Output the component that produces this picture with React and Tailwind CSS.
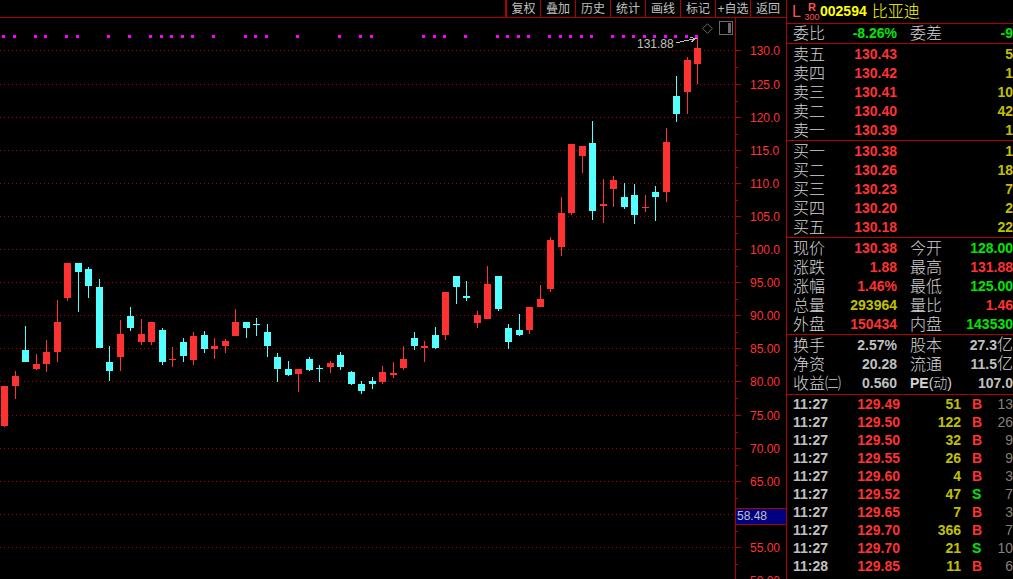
import clsx from 'clsx';

const TABS = ['复权', '叠加', '历史', '统计', '画线', '标记', '+自选', '返回'];

// [high, body top, body bottom, low, direction]
const CANDLES = [
  [386, 386, 426, 427, 'up'],
  [371, 376, 386, 399, 'up'],
  [326, 350, 362, 362, 'down'],
  [354, 364, 369, 370, 'up'],
  [340, 352, 364, 372, 'up'],
  [300, 322, 352, 362, 'up'],
  [263, 263, 298, 301, 'up'],
  [263, 263, 272, 312, 'down'],
  [267, 269, 286, 298, 'down'],
  [279, 287, 348, 348, 'down'],
  [346, 362, 371, 381, 'down'],
  [320, 334, 357, 371, 'up'],
  [307, 316, 328, 331, 'down'],
  [319, 334, 342, 345, 'up'],
  [322, 322, 342, 345, 'up'],
  [328, 330, 362, 365, 'down'],
  [347, 359, 360, 367, 'up'],
  [338, 342, 356, 362, 'down'],
  [332, 336, 360, 365, 'up'],
  [331, 335, 349, 353, 'down'],
  [338, 346, 349, 359, 'up'],
  [339, 341, 346, 353, 'up'],
  [309, 322, 336, 336, 'up'],
  [322, 322, 328, 338, 'down'],
  [318, 324, 325, 336, 'down'],
  [324, 332, 346, 357, 'down'],
  [353, 357, 369, 382, 'down'],
  [361, 369, 375, 376, 'down'],
  [369, 369, 374, 392, 'up'],
  [357, 359, 370, 371, 'down'],
  [365, 368, 369, 382, 'down'],
  [361, 363, 367, 373, 'up'],
  [352, 355, 367, 370, 'down'],
  [371, 372, 384, 385, 'down'],
  [381, 384, 391, 394, 'down'],
  [377, 381, 384, 389, 'down'],
  [366, 372, 382, 384, 'up'],
  [362, 373, 375, 378, 'up'],
  [346, 359, 368, 370, 'up'],
  [332, 338, 346, 350, 'down'],
  [341, 346, 348, 362, 'up'],
  [327, 335, 348, 349, 'down'],
  [292, 292, 335, 340, 'up'],
  [276, 276, 287, 304, 'down'],
  [281, 296, 298, 301, 'down'],
  [311, 315, 323, 328, 'up'],
  [266, 284, 319, 319, 'up'],
  [276, 276, 309, 311, 'down'],
  [324, 328, 342, 349, 'down'],
  [314, 330, 335, 336, 'down'],
  [307, 307, 330, 334, 'up'],
  [285, 299, 307, 307, 'up'],
  [237, 240, 289, 292, 'up'],
  [197, 213, 247, 256, 'up'],
  [144, 144, 213, 215, 'up'],
  [146, 146, 156, 173, 'up'],
  [121, 143, 211, 220, 'down'],
  [179, 204, 206, 223, 'up'],
  [176, 180, 189, 207, 'up'],
  [183, 197, 207, 209, 'down'],
  [184, 195, 215, 224, 'down'],
  [195, 207, 208, 212, 'up'],
  [186, 192, 197, 221, 'down'],
  [128, 142, 192, 202, 'up'],
  [76, 96, 114, 122, 'down'],
  [57, 60, 92, 114, 'up'],
  [38, 48, 64, 84, 'up'],
];

// candles that carry a signal dot along the top
const SIGNALS = [
  0, 1, 3, 4, 6, 7, 10, 12, 14, 15, 16, 17, 18, 20, 23, 24, 25, 28, 32, 34, 35, 40, 41, 42, 44,
  47, 48, 49, 50, 52, 53, 54, 55, 56, 58, 59, 60, 61, 62, 63, 64, 65, 66,
];

const SCALE = [
  [50, '130.0'],
  [84, '125.0'],
  [117, '120.0'],
  [150, '115.0'],
  [183, '110.0'],
  [216, '105.0'],
  [249, '100.0'],
  [282, '95.00'],
  [315, '90.00'],
  [348, '85.00'],
  [381, '80.00'],
  [415, '75.00'],
  [448, '70.00'],
  [481, '65.00'],
  [514, ''],
  [547, '55.00'],
  [580, '50.00'],
];

const SELLS = [
  ['卖五', '130.43', '5'],
  ['卖四', '130.42', '1'],
  ['卖三', '130.41', '10'],
  ['卖二', '130.40', '42'],
  ['卖一', '130.39', '1'],
];

const BUYS = [
  ['买一', '130.38', '1'],
  ['买二', '130.26', '18'],
  ['买三', '130.23', '7'],
  ['买四', '130.20', '2'],
  ['买五', '130.18', '22'],
];

const QUOTE = [
  ['现价', '130.38', 'red', '今开', '128.00', 'green'],
  ['涨跌', '1.88', 'red', '最高', '131.88', 'red'],
  ['涨幅', '1.46%', 'red', '最低', '125.00', 'green'],
  ['总量', '293964', 'yellow', '量比', '1.46', 'red'],
  ['外盘', '150434', 'red', '内盘', '143530', 'green'],
];

const TICKS = [
  ['11:27', '129.49', '51', 'B', '13'],
  ['11:27', '129.50', '122', 'B', '26'],
  ['11:27', '129.50', '32', 'B', '9'],
  ['11:27', '129.55', '26', 'B', '9'],
  ['11:27', '129.60', '4', 'B', '3'],
  ['11:27', '129.52', '47', 'S', '7'],
  ['11:27', '129.65', '7', 'B', '3'],
  ['11:27', '129.70', '366', 'B', '7'],
  ['11:27', '129.70', '21', 'S', '10'],
  ['11:28', '129.85', '11', 'B', '6'],
];

const COLORS = {
  red: 'text-[#ff3232]',
  green: 'text-[#00e600]',
  yellow: 'text-[#c0c000]',
  gray: 'text-[#c0c0c0]',
};

const candleX = (i) => Math.round(4 + i * 10.5);

const Toolbar = () => (
  <nav className="flex h-[18px] shrink-0 justify-end border-b border-[#b00000] pr-px">
    {TABS.map((tab, i) => (
      <button
        key={tab}
        type="button"
        className={clsx(
          'w-[35px] whitespace-nowrap border-[#b00000] text-center text-[12px] leading-4',
          i === 0 ? 'border-l-2' : 'border-l'
        )}
      >
        {tab}
      </button>
    ))}
  </nav>
);

const Candle = ({ index, data }) => {
  const [high, top, bottom, low, dir] = data;
  const x = candleX(index);
  return (
    <g className={dir === 'up' ? 'fill-[#ff3232]' : 'fill-[#54ffff]'}>
      <rect x={x} y={high} width="1" height={low - high} />
      <rect x={x - 3} y={top} width="7" height={bottom - top} />
    </g>
  );
};

const CandleChart = () => (
  <div className="relative min-w-0 flex-1 overflow-hidden">
    <svg className="block h-full w-full" shapeRendering="crispEdges">
      <g transform="translate(0 -18)">
        {SCALE.map(([y]) => (
          <line
            key={y}
            x1="0"
            x2="100%"
            y1={y + 0.5}
            y2={y + 0.5}
            stroke="#b00000"
            strokeDasharray="1 3"
          />
        ))}
        {SIGNALS.map((i) => (
          <rect key={i} x={candleX(i) - 2} y="35" width="3" height="3" fill="#ff00ff" />
        ))}
        {CANDLES.map((data, i) => (
          <Candle key={i} index={i} data={data} />
        ))}
        <text x="637" y="48" fontSize="12" fill="#c0c0c0">
          131.88
        </text>
        <path d="M676 43 L682 41.5 L696 38.5 M690 37.5 L696 38.5 L691 42" fill="none" stroke="#c0c0c0" />
      </g>
    </svg>
    <div className="absolute right-0.5 top-[3px] flex items-center gap-[6px]">
      <button type="button" aria-label="标记点">
        <svg width="11" height="11" className="block" fill="none" stroke="#6b6b6b">
          <path d="M5.5 0.7 L10.3 5.5 L5.5 10.3 L0.7 5.5 Z" />
        </svg>
      </button>
      <button type="button" aria-label="侧栏">
        <svg width="14" height="14" className="block" shapeRendering="crispEdges">
          <rect x="0.5" y="0.5" width="13" height="13" fill="none" stroke="#6b6b6b" />
          <rect x="9" y="2" width="3" height="10" fill="#6b6b6b" />
        </svg>
      </button>
    </div>
  </div>
);

const PriceAxis = () => (
  <div className="w-[51px] shrink-0 overflow-hidden border-l border-[#b00000]">
    <svg className="block h-full w-full">
      <g transform="translate(0 -18)">
        {SCALE.map(([y, label]) => (
          <g key={y}>
            <rect x="0" y={y} width="5" height="1" fill="#b00000" />
            <rect x="0" y={y + 17} width="2" height="1" fill="#b00000" />
            <text x="14" y={y + 5} fontSize="12" fill="#ff3232">
              {label}
            </text>
          </g>
        ))}
        <rect x="0" y="508" width="50" height="17" fill="#b00000" />
        <rect x="0" y="509" width="50" height="15" fill="#000080" />
        <text x="1" y="520" fontSize="12" fill="#c0c0c0">
          58.48
        </text>
      </g>
    </svg>
  </div>
);

const StockTitle = () => (
  <header className="flex h-6 items-center border-b border-[#b00000] pl-[5px]">
    <span className="w-3 text-[16px] leading-5 text-[#ff5050]">L</span>
    <span className="flex w-4 flex-col items-center text-[#ff5050]">
      <span className="text-[11px] font-bold leading-[10px]">R</span>
      <span className="text-[9px] leading-[10px]">300</span>
    </span>
    <h1 className="flex items-center gap-[5px] whitespace-nowrap text-[#ffff00]">
      <span className="text-[14px] font-bold">002594</span>
      <span className="text-[16px] font-light leading-5">比亚迪</span>
    </h1>
  </header>
);

const Label = ({ children, second }) => (
  <th
    scope="row"
    className={clsx(
      'whitespace-nowrap p-0 text-left text-[16px] font-light leading-[19px] text-[#d4d4d4]',
      second ? 'pl-[13px]' : 'pl-[6px]'
    )}
  >
    {children}
  </th>
);

const Value = ({ children, color = 'gray' }) => (
  <td className={clsx('whitespace-nowrap p-0 text-right text-[14px] font-bold leading-[19px]', COLORS[color])}>
    {children}
  </td>
);

const InfoTable = ({ className, children }) => (
  <div className={clsx('border-b border-[#b00000]', className)}>
    <table className="w-full table-fixed border-collapse">
      <colgroup>
        <col className="w-[58px]" />
        <col className="w-[52px]" />
        <col className="w-[60px]" />
        <col />
      </colgroup>
      <tbody>{children}</tbody>
    </table>
  </div>
);

const OrderRows = ({ rows }) =>
  rows.map(([label, price, volume]) => (
    <tr key={label}>
      <Label>{label}</Label>
      <Value color="red">{price}</Value>
      <td />
      <Value color="yellow">{volume}</Value>
    </tr>
  ));

const Yi = () => <span className="text-[16px] font-light leading-none text-[#d4d4d4]">亿</span>;

const TickTable = () => (
  <table className="w-full table-fixed border-collapse text-[14px] font-bold leading-[18px]">
    <colgroup>
      <col className="w-[58px]" />
      <col className="w-[55px]" />
      <col className="w-[61px]" />
      <col className="w-[30px]" />
      <col />
    </colgroup>
    <tbody>
      {TICKS.map(([time, price, volume, side, count], i) => (
        <tr key={i}>
          <td className="p-0 pl-[6px]">{time}</td>
          <td className="p-0 text-right text-[#ff3232]">{price}</td>
          <td className="p-0 text-right text-[#c0c000]">{volume}</td>
          <td className={clsx('p-0 pl-[11px]', side === 'B' ? 'text-[#ff3232]' : 'text-[#00e600]')}>
            {side}
          </td>
          <td className="p-0 text-right font-normal text-[#808080]">{count}</td>
        </tr>
      ))}
    </tbody>
  </table>
);

export default function App() {
  return (
    <div className="flex h-screen overflow-hidden bg-black font-['Liberation_Sans','Noto_Sans_CJK_SC',sans-serif] text-[#c0c0c0]">
      <main className="flex min-w-0 flex-1 flex-col">
        <Toolbar />
        <div className="flex min-h-0 flex-1">
          <CandleChart />
          <PriceAxis />
        </div>
      </main>

      <aside className="w-[227px] shrink-0 overflow-hidden border-l border-[#b00000]">
        <StockTitle />
        <InfoTable>
          <tr>
            <Label>委比</Label>
            <Value color="green">-8.26%</Value>
            <Label second>委差</Label>
            <Value color="green">-9</Value>
          </tr>
        </InfoTable>
        <InfoTable className="pt-px">
          <OrderRows rows={SELLS} />
        </InfoTable>
        <InfoTable className="pt-px">
          <OrderRows rows={BUYS} />
        </InfoTable>
        <InfoTable className="pt-px">
          {QUOTE.map(([label, value, color, label2, value2, color2]) => (
            <tr key={label}>
              <Label>{label}</Label>
              <Value color={color}>{value}</Value>
              <Label second>{label2}</Label>
              <Value color={color2}>{value2}</Value>
            </tr>
          ))}
        </InfoTable>
        <InfoTable className="pb-px pt-px">
          <tr>
            <Label>换手</Label>
            <Value>2.57%</Value>
            <Label second>股本</Label>
            <Value>
              27.3
              <Yi />
            </Value>
          </tr>
          <tr>
            <Label>净资</Label>
            <Value>20.28</Value>
            <Label second>流通</Label>
            <Value>
              11.5
              <Yi />
            </Value>
          </tr>
          <tr>
            <Label>收益㈡</Label>
            <Value>0.560</Value>
            <Label second>
              <span className="block text-[14px]">
                <span className="font-bold">PE</span>(动)
              </span>
            </Label>
            <Value>107.0</Value>
          </tr>
        </InfoTable>
        <TickTable />
      </aside>
    </div>
  );
}
